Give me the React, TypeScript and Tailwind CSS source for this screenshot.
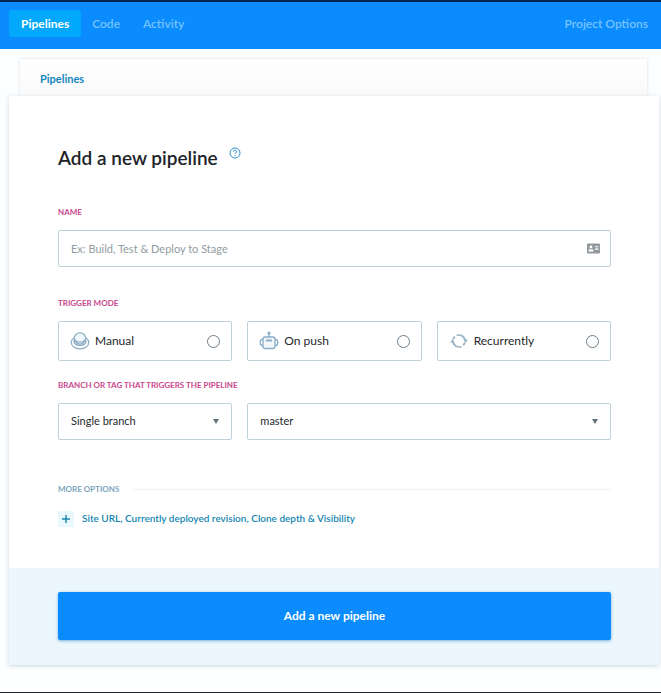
import type { ReactNode } from "react";
import { FaAddressCard } from "react-icons/fa";

const fieldLabel = "block text-[8px] leading-4 font-bold uppercase text-[#c9488d]";

const field =
  "w-full rounded-[2px] border border-[#bfd0d8] bg-white px-3 text-[11px] text-[#25282b] outline-none focus:border-[#0a8cff]";

function ButtonIcon() {
  return (
    <svg width="20" height="20" viewBox="0 0 20 20" fill="none" stroke="#8badc5" strokeWidth="1.2">
      <ellipse cx="10" cy="11.500" rx="8.800" ry="6.300" />
      <path d="M4 9.500c-1.500 6.500 13.500 6.500 12 0" />
      <ellipse cx="10" cy="7.500" rx="5.800" ry="5.700" fill="#f1f8fc" />
      <path d="M4.500 8c1 4 10 4 11 0" />
    </svg>
  );
}

function RobotIcon() {
  return (
    <svg width="20" height="20" viewBox="0 0 20 20" fill="none" stroke="#8badc5" strokeWidth="1.3">
      <circle cx="10" cy="2.200" r="1.600" fill="#8badc5" stroke="none" />
      <path d="M10 3.500v2.500" />
      <rect x="4" y="6" width="12" height="11.500" rx="2" fill="#f1f8fc" />
      <path d="M7 9.500h6" strokeWidth="2" />
      <path d="M4 8.500H2.600L1.300 10v3l1.300 1.500H4M16 8.500h1.400l1.300 1.500v3l-1.300 1.500H16" />
    </svg>
  );
}

function RecurIcon() {
  return (
    <svg width="20" height="20" viewBox="0 0 20 20" fill="none" stroke="#9bb4c6" strokeWidth="1.7">
      <path d="M7.500 4.600A6 6 0 0 1 16 10M12.500 15.400A6 6 0 0 1 4 10" />
      <path d="M4.200 8.500a6 6 0 0 1 1.700-2.900M15.800 11.500a6 6 0 0 1-1.700 2.900" />
      <path d="M14.500 8.500h4.300L16.500 12zM5.500 11.500H1.200L3.500 8z" fill="#9bb4c6" stroke="none" />
    </svg>
  );
}

function TriggerOption({ value, label, icon }: { value: string; label: string; icon: ReactNode }) {
  return (
    <label className="flex h-10 min-w-0 cursor-pointer items-center rounded-[2px] border border-[#bfd0d8] bg-white px-[11px] text-xs text-[#25282b]">
      {icon}
      <span className="ml-[5px] flex-1">{label}</span>
      <input
        type="radio"
        name="trigger"
        value={value}
        className="size-[13px] appearance-none rounded-full border border-[#6c7d88] checked:border-4 checked:border-[#0a8cff]"
      />
    </label>
  );
}

function SelectBox({ id, label, options, className = "" }: { id: string; label?: string; options: string[]; className?: string }) {
  return (
    <div className={`relative ${className}`}>
      <select id={id} aria-label={label} className={`${field} h-[37px] appearance-none`}>
        {options.map((option) => (
          <option key={option}>{option}</option>
        ))}
      </select>
      <svg className="pointer-events-none absolute inset-y-0 right-[13px] my-auto" width="6" height="5" viewBox="0 0 6 5" fill="#617079">
        <path d="M0 0h6L3 5z" />
      </svg>
    </div>
  );
}

function Header() {
  return (
    <header className="border-t-2 border-[#06264f] bg-[#0a8cff]">
      <nav className="flex h-[47px] items-start px-[9px] pt-2 text-xs leading-[27px] font-semibold text-[#78c3ff]">
        <a href="#pipelines" className="rounded-[2px] bg-[#02a8fb] px-3 font-bold text-white">
          Pipelines
        </a>
        <a href="#code" className="pr-3 pl-[11px]">
          Code
        </a>
        <a href="#activity" className="pr-3 pl-[11px]">
          Activity
        </a>
        <a href="#options" className="ml-auto pr-1">
          Project Options
        </a>
      </nav>
    </header>
  );
}

export default function App() {
  return (
    <div className="min-h-screen border-b border-[#20262d] bg-[#fcfeff] font-['Lato',sans-serif]">
      <Header />

      <div className="mr-[14px] ml-5 mt-[10px] flex h-[37px] items-center bg-gradient-to-b from-white to-[#fafafa] px-5 pt-1 shadow-[0_0_3px_rgba(60,90,110,0.18)]">
        <a href="#pipelines" className="text-[11px] font-bold text-[#1686bd]">
          Pipelines
        </a>
      </div>

      <main className="relative mr-0.5 mb-[26px] ml-[9px] bg-white shadow-[0_1px_4px_rgba(60,100,120,0.25)]">
        <form onSubmit={(e) => e.preventDefault()}>
          <div className="pt-12 pr-12 pb-10 pl-[49px]">
            <div className="flex items-start">
              <h1 className="text-[19px] leading-7 font-semibold text-[#202327]">Add a new pipeline</h1>
              <button type="button" aria-label="Help" className="ml-[11px] mt-[3px]">
                <svg width="12" height="12" viewBox="0 0 12 12" fill="none" stroke="#3191cf">
                  <circle cx="6" cy="6" r="5" />
                  <path d="M4.500 4.700a1.500 1.500 0 1 1 2.300 1.200c-.5.300-.8.500-.8 1.100M6 8v1" />
                </svg>
              </button>
            </div>

            <label htmlFor="name" className={`${fieldLabel} mt-8`}>
              Name
            </label>
            <div className="relative mt-[10px]">
              <input
                id="name"
                type="text"
                placeholder="Ex: Build, Test & Deploy to Stage"
                className={`${field} block h-[37px] pr-9 placeholder:text-[#929ca2]`}
              />
              <FaAddressCard className="pointer-events-none absolute inset-y-0 right-[11px] my-auto size-[13px] text-[#92999d]" />
            </div>

            <fieldset className="mt-7">
              <legend className={fieldLabel}>Trigger mode</legend>
              <div className="mt-[10px] grid grid-cols-3 gap-[15px]">
                <TriggerOption value="manual" label="Manual" icon={<ButtonIcon />} />
                <TriggerOption value="push" label="On push" icon={<RobotIcon />} />
                <TriggerOption value="recurrent" label="Recurrently" icon={<RecurIcon />} />
              </div>
            </fieldset>

            <label htmlFor="ref-type" className={`${fieldLabel} mt-4`}>
              Branch or tag that triggers the pipeline
            </label>
            <div className="mt-[10px] grid grid-cols-3 gap-[15px]">
              <SelectBox id="ref-type" options={["Single branch", "Tag", "Wildcard"]} />
              <SelectBox id="ref-name" label="Branch name" options={["master", "develop"]} className="col-span-2" />
            </div>

            <div className="mt-[41px] flex items-center gap-[14px]">
              <h2 className="text-[8px] leading-4 font-bold text-[#7ba3bd] uppercase">More options</h2>
              <div className="h-px flex-1 bg-[#edf2f4]" />
            </div>
            <button type="button" className="mt-3 flex h-[19px] items-center gap-2 text-[10px] font-semibold text-[#1686b0]">
              <span className="flex size-4 items-center justify-center bg-[#e9f8fd]">
                <svg width="8" height="8" viewBox="0 0 8 8" stroke="#1686b0" strokeWidth="1.400">
                  <path d="M4 0v8M0 4h8" />
                </svg>
              </span>
              Site URL, Currently deployed revision, Clone depth &amp; Visibility
            </button>
          </div>

          <div className="bg-[#ebf7fc] pt-6 pr-12 pb-[25px] pl-[49px]">
            <button type="submit" className="h-12 w-full rounded-[2px] bg-[#0a8cff] text-xs font-bold text-white shadow-[0_1px_3px_rgba(10,110,190,0.5)]">
              Add a new pipeline
            </button>
          </div>
        </form>
      </main>
    </div>
  );
}
